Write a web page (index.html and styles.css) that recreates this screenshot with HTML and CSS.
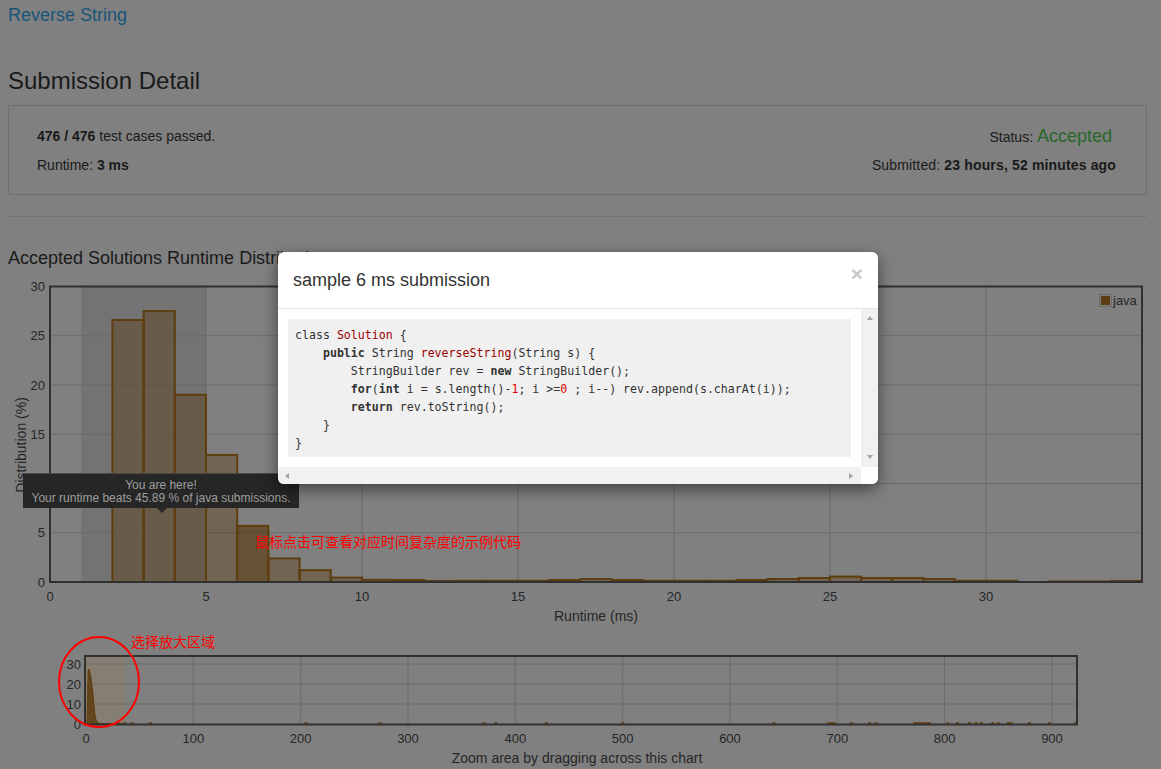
FILE: index.html
```html
<!DOCTYPE html>
<html lang="en">
<head>
<meta charset="utf-8">
<title>Submission Detail</title>
<link rel="stylesheet" href="styles.css">
</head>
<body>
<div class="page">
  <a class="problem-link" href="#">Reverse String</a>
  <h3 class="page-title">Submission Detail</h3>
  <div class="summary">
    <div class="sum-item"><b>476 / 476</b> test cases passed.</div>
    <div class="sum-item status">Status: <span class="accepted">Accepted</span></div>
    <div class="sum-item">Runtime: <b>3 ms</b></div>
    <div class="sum-item submitted">Submitted: <b>23 hours, 52 minutes ago</b></div>
  </div>
  <hr class="divider">
  <h4 class="section-title">Accepted Solutions Runtime Distribution</h4>

  <div class="chart-main">
    <svg width="1139" height="355" viewBox="0 0 1139 355">
      <rect class="band" x="73.2" y="16.5" width="124.8" height="295.5"/>
      <g class="grid">
        <line x1="42" x2="1134" y1="262.75" y2="262.75"/>
        <line x1="42" x2="1134" y1="213.5" y2="213.5"/>
        <line x1="42" x2="1134" y1="164.25" y2="164.25"/>
        <line x1="42" x2="1134" y1="115" y2="115"/>
        <line x1="42" x2="1134" y1="65.75" y2="65.75"/>
        <line x1="198" x2="198" y1="16.5" y2="312"/>
        <line x1="354" x2="354" y1="16.5" y2="312"/>
        <line x1="510" x2="510" y1="16.5" y2="312"/>
        <line x1="666" x2="666" y1="16.5" y2="312"/>
        <line x1="822" x2="822" y1="16.5" y2="312"/>
        <line x1="978" x2="978" y1="16.5" y2="312"/>
      </g>
      <g class="bars">
        <rect x="104.4" y="50" width="31.2" height="262"/>
        <rect x="135.6" y="41.1" width="31.2" height="270.9"/>
        <rect x="166.8" y="124.8" width="31.2" height="187.2"/>
        <rect x="198" y="184.9" width="31.2" height="127.1"/>
        <rect class="sel" x="229.2" y="255.9" width="31.2" height="56.1"/>
        <rect x="260.4" y="288.4" width="31.2" height="23.6"/>
        <rect x="291.6" y="300.2" width="31.2" height="11.8"/>
        <rect x="322.8" y="307.6" width="31.2" height="4.4"/>
        <rect x="354" y="309.8" width="31.2" height="2.2"/>
        <rect x="385.2" y="310" width="31.2" height="2"/>
        <rect x="416.4" y="311" width="31.2" height="1"/>
        <rect x="447.6" y="310.8" width="31.2" height="1.2"/>
        <rect x="478.8" y="310.8" width="31.2" height="1.2"/>
        <rect x="510" y="310.8" width="31.2" height="1.2"/>
        <rect x="541.2" y="310" width="31.2" height="2"/>
        <rect x="572.4" y="309" width="31.2" height="3"/>
        <rect x="603.6" y="310" width="31.2" height="2"/>
        <rect x="634.8" y="310.8" width="31.2" height="1.2"/>
        <rect x="666" y="310.8" width="31.2" height="1.2"/>
        <rect x="697.2" y="310.8" width="31.2" height="1.2"/>
        <rect x="728.4" y="310" width="31.2" height="2"/>
        <rect x="759.6" y="309" width="31.2" height="3"/>
        <rect x="790.8" y="308" width="31.2" height="4"/>
        <rect x="822" y="306.6" width="31.2" height="5.4"/>
        <rect x="853.2" y="308" width="31.2" height="4"/>
        <rect x="884.4" y="308" width="31.2" height="4"/>
        <rect x="915.6" y="309" width="31.2" height="3"/>
        <rect x="946.8" y="310.8" width="31.2" height="1.2"/>
        <rect x="978" y="310.8" width="31.2" height="1.2"/>
        <rect x="1040.4" y="311.5" width="31.2" height="0.5"/>
        <rect x="1071.6" y="311.5" width="31.2" height="0.5"/>
        <rect x="1102.8" y="311" width="31.2" height="1"/>
      </g>
      <rect class="frame" x="42" y="16.5" width="1092" height="295.5"/>
      <g class="ax ax-y">
        <text x="37" y="316.5">0</text>
        <text x="37" y="267.25">5</text>
        <text x="37" y="218">10</text>
        <text x="37" y="168.75">15</text>
        <text x="37" y="119.5">20</text>
        <text x="37" y="70.25">25</text>
        <text x="37" y="21">30</text>
      </g>
      <g class="ax ax-x">
        <text x="42" y="331">0</text>
        <text x="198" y="331">5</text>
        <text x="354" y="331">10</text>
        <text x="510" y="331">15</text>
        <text x="666" y="331">20</text>
        <text x="822" y="331">25</text>
        <text x="978" y="331">30</text>
      </g>
      <text class="ax-title" x="588" y="351">Runtime (ms)</text>
      <text class="ax-title" transform="translate(18,175) rotate(-90)">Distribution (%)</text>
      <g class="legend">
        <rect class="legend-box" x="1091.5" y="24.5" width="12" height="12"/>
        <rect class="legend-fill" x="1093" y="26" width="9" height="9"/>
        <text class="ax" x="1105" y="35">java</text>
      </g>
      <text class="note" x="247" y="277">鼠标点击可查看对应时间复杂度的示例代码</text>
    </svg>
    <div class="tip">You are here!<br>Your runtime beats 45.89 % of java submissions.</div>
  </div>

  <div class="chart-zoom">
    <svg width="1139" height="144" viewBox="0 0 1139 144">
      <g class="grid">
        <line x1="77" x2="1069" y1="79" y2="79"/>
        <line x1="77" x2="1069" y1="59" y2="59"/>
        <line x1="77" x2="1069" y1="39" y2="39"/>
        <line x1="185.3" x2="185.3" y1="31" y2="99.5"/>
        <line x1="292.7" x2="292.7" y1="31" y2="99.5"/>
        <line x1="400" x2="400" y1="31" y2="99.5"/>
        <line x1="507.3" x2="507.3" y1="31" y2="99.5"/>
        <line x1="614.7" x2="614.7" y1="31" y2="99.5"/>
        <line x1="722" x2="722" y1="31" y2="99.5"/>
        <line x1="829.3" x2="829.3" y1="31" y2="99.5"/>
        <line x1="936.6" x2="936.6" y1="31" y2="99.5"/>
        <line x1="1044" x2="1044" y1="31" y2="99.5"/>
      </g>
      <rect class="brush" x="78" y="31" width="37.6" height="68.5"/>
      <path class="spike" d="M78,99 L79.1,98.5 L80.1,45.8 L81.2,44 L82.8,52 L84,61 L85.4,73.2 L86.6,87.6 L87.8,94.2 L89,96.6 L90.5,98.1 L92,98.5 L115.6,98.5 L115.6,99 Z"/>
      <g class="dots">
        <rect x="115.3" y="97" width="3" height="2"/>
        <rect x="122.8" y="97" width="3" height="2"/>
        <rect x="140.9" y="97" width="3" height="2"/>
        <rect x="296.5" y="97" width="3" height="2"/>
        <rect x="370.6" y="97" width="3" height="2"/>
        <rect x="474.6" y="97" width="3" height="2"/>
        <rect x="486.4" y="97" width="3" height="2"/>
        <rect x="536.9" y="97" width="3" height="2"/>
        <rect x="613.2" y="97" width="3" height="2"/>
        <rect x="764.4" y="97" width="3" height="2"/>
        <rect x="819.3" y="97" width="8" height="2"/>
        <rect x="842" y="97" width="3" height="2"/>
        <rect x="860.2" y="97" width="3" height="2"/>
        <rect x="866.3" y="97" width="3" height="2"/>
        <rect x="905" y="97" width="18" height="2"/>
        <rect x="938.4" y="97" width="3" height="2"/>
        <rect x="948" y="97" width="3" height="2"/>
        <rect x="959.8" y="97" width="3" height="2"/>
        <rect x="966.5" y="97" width="3" height="2"/>
        <rect x="971.9" y="97" width="3" height="2"/>
        <rect x="983.2" y="97" width="3" height="2"/>
        <rect x="988.6" y="97" width="3" height="2"/>
        <rect x="998.5" y="97" width="6" height="2"/>
        <rect x="1020" y="97" width="3" height="2"/>
        <rect x="1040" y="97" width="3" height="2"/>
        <rect x="1066" y="97" width="3" height="2"/>
      </g>
      <rect class="frame" x="77" y="31" width="992" height="68.5"/>
      <g class="ax ax-y">
        <text x="73" y="103.5">0</text>
        <text x="73" y="83.5">10</text>
        <text x="73" y="63.5">20</text>
        <text x="73" y="43.5">30</text>
      </g>
      <g class="ax ax-x">
        <text x="78" y="117.5">0</text>
        <text x="185.3" y="117.5">100</text>
        <text x="292.7" y="117.5">200</text>
        <text x="400" y="117.5">300</text>
        <text x="507.3" y="117.5">400</text>
        <text x="614.7" y="117.5">500</text>
        <text x="722" y="117.5">600</text>
        <text x="829.3" y="117.5">700</text>
        <text x="936.6" y="117.5">800</text>
        <text x="1044" y="117.5">900</text>
      </g>
      <text class="ax-title" x="569" y="138">Zoom area by dragging across this chart</text>
      <ellipse class="mark" cx="91" cy="57" rx="40" ry="45"/>
      <text class="note" x="123" y="22">选择放大区域</text>
    </svg>
  </div>
</div>

<div class="modal">
  <div class="modal-header">
    <h4 class="modal-title">sample 6 ms submission</h4>
    <span class="close">×</span>
  </div>
  <div class="modal-body">
    <div class="code-view">
      <pre class="code"><span class="ln">class <span class="ti">Solution</span> {</span><span class="ln">    <span class="kw">public</span> String <span class="ti">reverseString</span>(String s) {</span><span class="ln">        StringBuilder rev = <span class="kw">new</span> StringBuilder();</span><span class="ln">        <span class="kw">for</span>(<span class="kw">int</span> i = s.length()-<span class="num">1</span>; i &gt;=<span class="num">0</span> ; i--) rev.append(s.charAt(i));</span><span class="ln">        <span class="kw">return</span> rev.toString();</span><span class="ln">    }</span><span class="ln">}</span></pre>
    </div>
    <div class="vbar"><span class="arr arr-up"></span><span class="arr arr-down"></span></div>
    <div class="hbar"><span class="arr arr-left"></span><span class="arr arr-right"></span></div>
    <div class="corner"></div>
  </div>
</div>
</body>
</html>
```

FILE: styles.css
```css
html, body {
  margin: 0;
  padding: 0;
}

body {
  width: 1161px;
  height: 769px;
  overflow: hidden;
  background: #808080;
  font-family: "Liberation Sans", Arial, sans-serif;
  color: #1a1a1a;
}

.page {
  width: 1139px;
  margin-left: 8px;
}

.problem-link {
  display: block;
  margin-top: 5px;
  font-size: 18px;
  line-height: 20px;
  color: #175578;
  text-decoration: none;
}

.page-title {
  margin: 43px 0 0;
  font-size: 24px;
  line-height: 26px;
  font-weight: normal;
}

.summary {
  margin-top: 11px;
  border: 1px solid #6e6e6e;
  padding: 20px 30px 19px 28px;
  display: grid;
  grid-template-columns: 1fr auto;
  grid-template-rows: 20px 20px;
  row-gap: 9px;
  font-size: 14px;
  line-height: 20px;
}

.sum-item {
  white-space: nowrap;
}

.status,
.submitted {
  text-align: right;
}

.status {
  padding-right: 4px;
}

.submitted {
  letter-spacing: 0.15px;
}

.accepted {
  font-size: 18px;
  color: #296629;
}

.divider {
  margin: 21px 0 0;
  height: 0;
  border: 0;
  border-top: 1px solid #747474;
}

.section-title {
  margin: 31px 0 0;
  font-size: 18px;
  line-height: 20px;
  font-weight: normal;
}

.chart-main {
  position: relative;
  margin-top: 2px;
  height: 355px;
}

.chart-zoom {
  height: 144px;
}

svg {
  display: block;
}

.band {
  fill: rgba(0, 0, 0, 0.1);
}

.grid line {
  stroke: #6b6b6b;
  stroke-width: 1;
}

.bars rect {
  fill: rgba(88, 52, 5, 0.37);
  stroke: #5e3d0e;
  stroke-width: 2;
}

.bars rect.sel {
  fill: rgba(88, 52, 5, 0.6);
}

.frame {
  fill: none;
  stroke: #303030;
  stroke-width: 2;
}

.ax {
  font-family: "Liberation Sans", Arial, sans-serif;
  font-size: 13px;
  fill: #262626;
}

.ax-y text {
  text-anchor: end;
}

.ax-x text {
  text-anchor: middle;
}

.ax-title {
  font-family: "Liberation Sans", Arial, sans-serif;
  font-size: 14px;
  fill: #262626;
  text-anchor: middle;
}

.legend-box {
  fill: none;
  stroke: #6a6a6a;
  stroke-width: 1;
}

.legend-fill {
  fill: #5c3d10;
}

.note {
  font-family: "Noto Sans CJK SC", sans-serif;
  font-size: 14px;
  fill: #ff0000;
}

.mark {
  fill: none;
  stroke: #ff0000;
  stroke-width: 2;
}

.brush {
  fill: rgba(160, 120, 60, 0.2);
  stroke: rgba(150, 125, 90, 0.6);
  stroke-width: 1;
}

.spike {
  fill: #64461c;
  stroke: #5e3d0e;
  stroke-width: 1;
}

.dots rect {
  fill: #6a4a1a;
}

.tip {
  position: absolute;
  left: 15px;
  top: 203px;
  width: 276px;
  padding: 5px 0 4px;
  background: #262626;
  border-top: 1px solid #4a4a4a;
  color: #9e9e9e;
  font-size: 12px;
  line-height: 12.5px;
  text-align: center;
  white-space: nowrap;
}

.tip::after {
  content: "";
  position: absolute;
  left: 134px;
  bottom: -5px;
  border-left: 5px solid transparent;
  border-right: 5px solid transparent;
  border-top: 5px solid #262626;
}

/* modal */
.modal {
  position: absolute;
  left: 278px;
  top: 252px;
  width: 600px;
  background: #fff;
  border-radius: 6px;
  box-shadow: 0 5px 15px rgba(0, 0, 0, 0.5);
  overflow: hidden;
}

.modal-header {
  display: flex;
  justify-content: space-between;
  align-items: flex-start;
  padding: 15px;
  border-bottom: 1px solid #e5e5e5;
}

.modal-title {
  margin: 0;
  font-size: 18px;
  line-height: 26px;
  font-weight: normal;
  color: #333;
}

.close {
  font-size: 21px;
  font-weight: bold;
  line-height: 1;
  color: #c8c8c8;
  margin-top: -4px;
}

.modal-body {
  display: grid;
  grid-template-columns: 1fr 17px;
  grid-template-rows: 158px 17px;
}

.code-view {
  padding: 10px;
}

.code {
  margin: 0;
  padding: 7px 7px 5px;
  background: #f0f0f0;
  font-family: "DejaVu Sans Mono", "Liberation Mono", monospace;
  font-size: 11.6px;
  line-height: 18px;
  color: #333;
}

.ln {
  display: block;
  height: 18px;
}

.kw {
  font-weight: bold;
}

.ti {
  color: #990000;
}

.num {
  color: #dd0000;
}

.vbar {
  background: #f1f1f1;
  display: flex;
  flex-direction: column;
  justify-content: space-between;
  align-items: center;
  padding: 7px 0 8px;
}

.hbar {
  background: #f1f1f1;
  display: flex;
  justify-content: space-between;
  align-items: center;
  padding: 0 8px 0 7px;
}

.corner {
  background: #fff;
}

.arr {
  width: 0;
  height: 0;
}

.arr-up {
  border-left: 3.5px solid transparent;
  border-right: 3.5px solid transparent;
  border-bottom: 4px solid #a3a3a3;
}

.arr-down {
  border-left: 3.5px solid transparent;
  border-right: 3.5px solid transparent;
  border-top: 4px solid #a3a3a3;
}

.arr-left {
  border-top: 3.5px solid transparent;
  border-bottom: 3.5px solid transparent;
  border-right: 4px solid #a3a3a3;
}

.arr-right {
  border-top: 3.5px solid transparent;
  border-bottom: 3.5px solid transparent;
  border-left: 4px solid #a3a3a3;
}
```
